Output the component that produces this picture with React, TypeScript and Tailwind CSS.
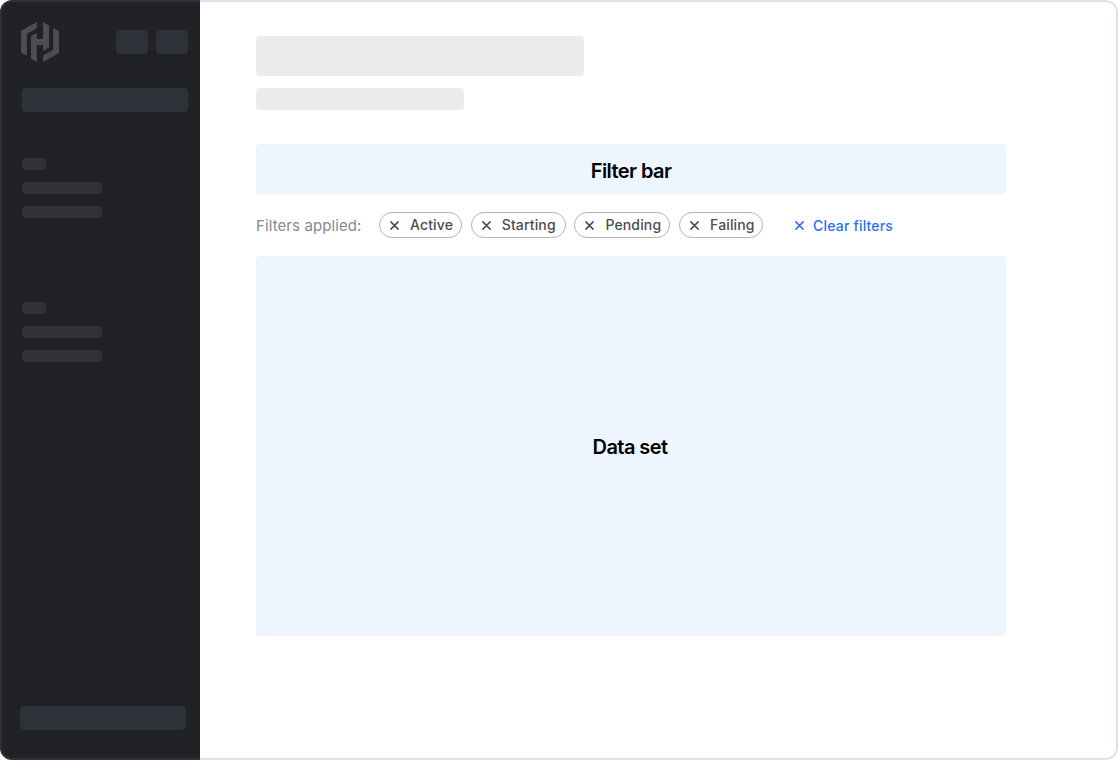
import React from "react";

function Cross({ className }: { className: string }) {
  return (
    <svg viewBox="0 0 10 10" className={className} fill="none" stroke="currentColor" strokeWidth="1.7" strokeLinecap="round">
      <path d="M1 1L9 9M9 1L1 9" />
    </svg>
  );
}

function Logo() {
  return (
    <svg viewBox="0 0 38 40" className="h-10 w-[38px] text-[#4d4e53]" fill="currentColor">
      <path d="M15.8 0L0 8.8V30.4L5.9 33.8V12L15.8 6.3Z" />
      <path d="M22.1 0V17.1H15.8V11L10 14.2V36.6L15.8 40V22.9H22.1V28.8L28 25.5V3.4Z" />
      <path d="M32.1 6L38 9.3V31L22.1 40V33.6L32.1 27.9Z" />
    </svg>
  );
}

function NavGroup() {
  return (
    <div className="flex flex-col gap-3">
      <div className="h-3 w-6 rounded bg-[#303238]" />
      <div className="h-3 w-20 rounded bg-[#303238]" />
      <div className="h-3 w-20 rounded bg-[#303238]" />
    </div>
  );
}

const filters = [
  { label: "Active", width: "w-[83px]" },
  { label: "Starting", width: "w-[95px]" },
  { label: "Pending", width: "w-[96px]" },
  { label: "Failing", width: "w-[84px]" },
];

export default function App() {
  return (
    <div className="relative flex h-[760px] w-[1118px] overflow-hidden rounded-xl bg-white font-['Inter',sans-serif]">
      <aside className="flex h-full w-[200px] shrink-0 flex-col bg-[#212227] pt-[22px] pl-[22px]">
        <div className="-ml-px flex h-10 items-center">
          <Logo />
          <div className="ml-[57px] flex gap-2">
            <div className="h-6 w-8 rounded bg-[#2e3138]" />
            <div className="h-6 w-8 rounded bg-[#2e3138]" />
          </div>
        </div>
        <div className="mt-[26px] h-6 w-[166px] rounded bg-[#2e3138]" />
        <div className="mt-[46px] flex flex-col gap-[84px]">
          <NavGroup />
          <NavGroup />
        </div>
        <div className="mt-auto mb-[30px] -ml-0.5 h-6 w-[166px] rounded bg-[#2e3138]" />
      </aside>
      <main className="flex w-[806px] flex-col pt-9 pl-14">
        <div className="h-10 w-[328px] rounded bg-[#ebebeb]" />
        <div className="mt-3 h-[22px] w-52 rounded bg-[#ebebeb]" />
        <section className="mt-[34px] flex h-[50px] items-center justify-center rounded bg-[#edf5ff] pt-1 text-[20px] font-semibold tracking-[-0.58px] text-black">
          Filter bar
        </section>
        <div className="flex h-[62px] items-center">
          <span className="w-[123px] shrink-0 pt-0.5 text-[15px] tracking-[0.1px] whitespace-nowrap text-[#858992]">Filters applied:</span>
          <div className="flex shrink-0 gap-[8.7px]">
            {filters.map(({ label, width }) => (
              <div key={label} className={`${width} flex h-[26px] items-center rounded-full border border-[#b5b5b7] pl-2.5 text-[#4b4d54]`}>
                <Cross className="h-[9px] w-[9px] shrink-0" />
                <span className="ml-[11px] pb-0.5 text-[14px] font-medium tracking-[0.15px]">{label}</span>
              </div>
            ))}
          </div>
          <button className="ml-8 flex items-center text-[14px] font-medium tracking-[0.18px] whitespace-nowrap text-[#2e6ff5]">
            <Cross className="mr-[9px] h-[9px] w-[9px]" />
            Clear filters
          </button>
        </div>
        <section className="flex h-[380px] items-center justify-center rounded bg-[#edf5ff] pr-0.5 pt-0.5 text-[20px] font-semibold tracking-[-0.58px] text-black">
          Data set
        </section>
      </main>
      <div className="pointer-events-none absolute inset-0 rounded-xl border-2 border-[#656a76]/20" />
    </div>
  );
}
